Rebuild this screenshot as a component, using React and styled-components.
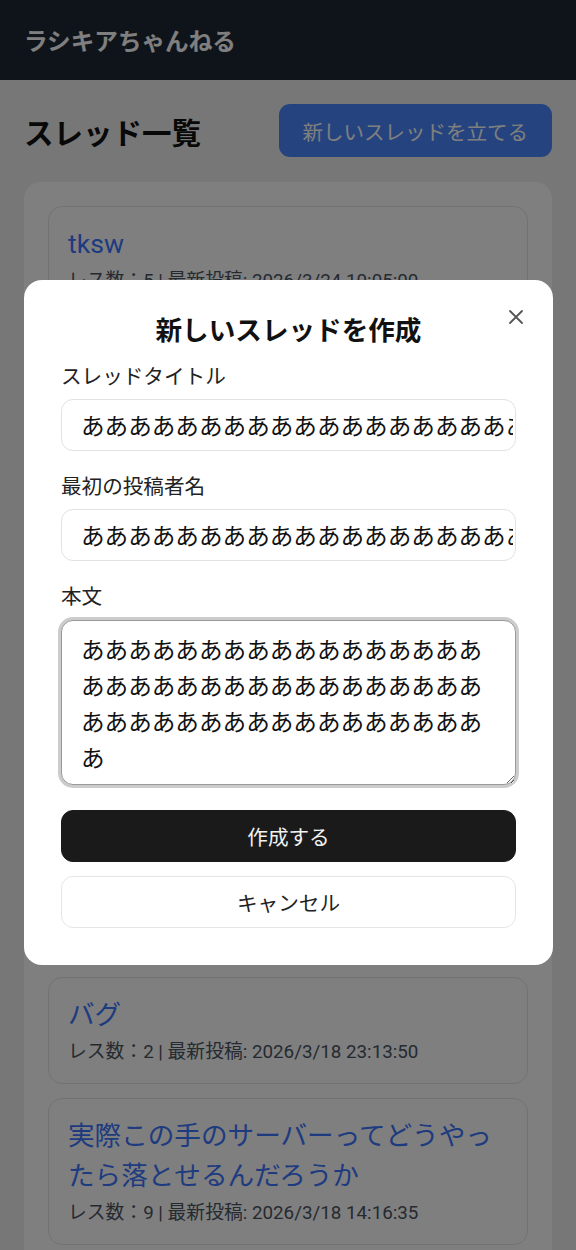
import React from "react";
import styled, { createGlobalStyle } from "styled-components";

const GlobalStyle = createGlobalStyle`
  * { box-sizing: border-box; }
  html, body { margin: 0; padding: 0; }
  body {
    background: #efefef;
    font-family: Roboto, "Noto Sans CJK JP", sans-serif;
    color: #111;
  }
`;

const Header = styled.header`
  height: 80px;
  background: #1f2937;
  display: flex;
  align-items: center;
  padding: 0 24px;
`;

const Brand = styled.div`
  color: #ffffff;
  font-size: 23.6px;
  font-weight: 700;
  font-family: "Noto Sans CJK JP", sans-serif;
`;

const Main = styled.main`
  padding: 24px;
`;

const TitleRow = styled.div`
  display: flex;
  justify-content: space-between;
  align-items: center;
  margin-bottom: 25px;
`;

const PageTitle = styled.h1`
  margin: 0;
  font-size: 29.5px;
  font-weight: 700;
  font-family: "Noto Sans CJK JP", sans-serif;
  color: #111;
`;

const PrimaryButton = styled.button`
  height: 53px;
  padding: 0 24px;
  border: none;
  border-radius: 11px;
  background: #4a88ff;
  color: #fff;
  font-size: 20.5px;
  font-family: "Noto Sans CJK JP", sans-serif;
`;

const ListCard = styled.section`
  background: #fff;
  border-radius: 17px;
  padding: 24px;
  display: flex;
  flex-direction: column;
  gap: 14.75px;
`;

const Item = styled.article`
  border: 1px solid #e4e4e4;
  border-radius: 14px;
  padding: 17px 19px 17px;
`;

const ItemTitle = styled.a`
  display: block;
  color: #3d76ff;
  font-size: 26.6px;
  line-height: 40px;
  text-decoration: none;
  margin-bottom: 3px;
`;

const ItemMeta = styled.div`
  color: #4b5563;
  font-size: 18.8px;
  line-height: 28px;
`;

const Overlay = styled.div`
  position: fixed;
  inset: 0;
  background: rgba(0, 0, 0, 0.5);
  display: flex;
  align-items: center;
  justify-content: center;
  padding: 0 23px 6px 24px;
`;

const Modal = styled.div`
  position: relative;
  width: 100%;
  background: #fff;
  border-radius: 18px;
  padding: 32px 37px 37px;
  font-family: "Noto Sans CJK JP", sans-serif;
`;

const CloseButton = styled.button`
  position: absolute;
  top: 27px;
  right: 27px;
  width: 20px;
  height: 20px;
  padding: 0;
  border: none;
  background: none;
  display: flex;
  align-items: center;
  justify-content: center;
`;

const ModalTitle = styled.h2`
  margin: 0 0 15px;
  text-align: center;
  font-size: 26.6px;
  line-height: 33px;
  font-weight: 700;
  color: #111;
`;

const Field = styled.div`
  display: flex;
  flex-direction: column;
  gap: ${(p) => p.$gap || 8}px;
  margin-bottom: ${(p) => p.$mb ?? 19}px;
`;

const Label = styled.label`
  font-size: 20.6px;
  line-height: 31px;
  color: #222;
`;

const TextInput = styled.input`
  height: 52px;
  width: 100%;
  border: 1px solid #e2e2e2;
  border-radius: 12px;
  padding: 0 2px 0 19px;
  font-size: 23.6px;
  font-family: "Noto Sans CJK JP", sans-serif;
  color: #111;
  background: #fff;
  outline: none;
`;

const TextArea = styled.textarea`
  display: block;
  height: 165px;
  width: 100%;
  border: 1px solid #9a9a9a;
  border-radius: 12px;
  box-shadow: 0 0 0 3px #cccccc;
  padding: 10px 18px 10px 19px;
  font-size: 23.6px;
  line-height: 36px;
  font-family: "Noto Sans CJK JP", sans-serif;
  color: #111;
  background: #fff;
  outline: none;
  resize: vertical;
  overflow: hidden;
`;

const Actions = styled.div`
  display: flex;
  flex-direction: column;
  gap: 14px;
  margin-top: 25px;
`;

const ActionButton = styled.button`
  height: 52px;
  width: 100%;
  border-radius: 12px;
  border: 1px solid ${(p) => (p.$primary ? "#1a1a1a" : "#e6e6e6")};
  background: ${(p) => (p.$primary ? "#1a1a1a" : "#fff")};
  color: ${(p) => (p.$primary ? "#f2f2f2" : "#222")};
  font-size: 20.6px;
  font-family: "Noto Sans CJK JP", sans-serif;
`;

const threads = [
  { title: "tksw", count: 5, date: "2026/3/24 10:05:00" },
  { title: "雑談スレ", count: 12, date: "2026/3/23 21:44:10" },
  { title: "テスト", count: 3, date: "2026/3/22 18:02:31" },
  { title: "このサイトの使い方について質問があるんだけど誰か教えて", count: 7, date: "2026/3/21 12:30:05" },
  { title: "おすすめのアニメ", count: 4, date: "2026/3/20 09:15:47" },
  { title: "初投稿", count: 1, date: "2026/3/19 16:40:22" },
  { title: "バグ", count: 2, date: "2026/3/18 23:13:50" },
  { title: "実際この手のサーバーってどうやったら落とせるんだろうか", count: 9, date: "2026/3/18 14:16:35" },
];

const A = "あ";

export default function App() {
  return (
    <>
      <GlobalStyle />
      <Header>
        <Brand>ラシキアちゃんねる</Brand>
      </Header>
      <Main>
        <TitleRow>
          <PageTitle>スレッド一覧</PageTitle>
          <PrimaryButton>新しいスレッドを立てる</PrimaryButton>
        </TitleRow>
        <ListCard>
          {threads.map((t) => (
            <Item key={t.title}>
              <ItemTitle href="#">{t.title}</ItemTitle>
              <ItemMeta>
                レス数：{t.count} | 最新投稿: {t.date}
              </ItemMeta>
            </Item>
          ))}
        </ListCard>
      </Main>
      <Overlay>
        <Modal>
          <CloseButton aria-label="閉じる">
            <svg width="16" height="16" viewBox="0 0 16 16" fill="none">
              <path d="M2 2L14 14M14 2L2 14" stroke="#555" strokeWidth="1.8" strokeLinecap="round" />
            </svg>
          </CloseButton>
          <ModalTitle>新しいスレッドを作成</ModalTitle>
          <Field>
            <Label>スレッドタイトル</Label>
            <TextInput readOnly value={A.repeat(24)} />
          </Field>
          <Field>
            <Label>最初の投稿者名</Label>
            <TextInput readOnly value={A.repeat(24)} />
          </Field>
          <Field $gap={9} $mb={0}>
            <Label>本文</Label>
            <TextArea readOnly value={A.repeat(52)} />
          </Field>
          <Actions>
            <ActionButton $primary>作成する</ActionButton>
            <ActionButton>キャンセル</ActionButton>
          </Actions>
        </Modal>
      </Overlay>
    </>
  );
}
